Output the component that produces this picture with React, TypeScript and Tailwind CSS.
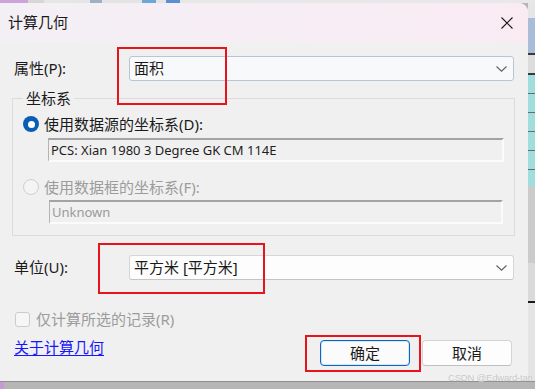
import React from "react";

const font = "font-['Noto_Sans','Noto_Sans_CJK_SC',sans-serif]";

function Chevron() {
  return (
    <svg width="11" height="6" viewBox="0 0 11 6" className="shrink-0">
      <path d="M0.5 0.5 L5.5 5.2 L10.5 0.5" fill="none" stroke="#606060" strokeWidth="1.1" />
    </svg>
  );
}

function Select({ value, focused }: { value: string; focused?: boolean }) {
  return (
    <div
      className={`w-[385px] h-[25px] flex items-center justify-between pl-[4px] pr-[6px] rounded-[3px] border ${
        focused ? "border-[#b7c6d6] bg-[#f7f9fb]" : "border-[#d6d6d6] border-b-[#c4c4c4] bg-[#fdfdfd]"
      }`}
    >
      <span className="text-[15px] leading-none text-[#1a1a1a]">{value}</span>
      <Chevron />
    </div>
  );
}

function Field({ value, disabled }: { value: string; disabled?: boolean }) {
  return (
    <div
      className={`h-[24px] flex items-center pl-[2px] bg-[#f0f0f0] border-t-2 border-l border-t-[#a3a3a3] border-l-[#b4b4b4] border-r-2 border-b-2 border-r-[#fbfbfb] border-b-[#fbfbfb] ${
        disabled ? "w-[454px] text-[#9a9a9a]" : "w-[456px] text-[#1e1e1e]"
      }`}
    >
      <span className="text-[13px] leading-none">{value}</span>
    </div>
  );
}

export default function App() {
  return (
    <div className={`w-[535px] h-[389px] bg-[#b6b6b6] flex flex-col overflow-hidden relative ${font}`}>
      {/* strip of the window behind */}
      <div className="h-[3px] flex shrink-0">
        <div className="w-[28px] bg-[#cda3dc]" />
        <div className="w-[16px] bg-[#d6d6d6]" />
        <div className="w-[46px] bg-[#e6e6e6]" />
        <div className="w-[12px] bg-[#9fb0c4]" />
        <div className="w-[40px] bg-[#e4e4e4]" />
        <div className="w-[14px] bg-[#6aa8d8]" />
        <div className="w-[10px] bg-[#e4e4e4]" />
        <div className="w-[14px] bg-[#5a8fd0]" />
        <div className="flex-1 bg-[#e8e8e8]" />
      </div>

      <div className="flex h-[378px] shrink-0">
        {/* dialog */}
        <div className="w-[528px] rounded-tr-[9px] bg-[#f0f0f0] flex flex-col overflow-hidden">
          <div className="h-[39px] shrink-0 flex items-center justify-between pl-[8px] pr-[15px] bg-gradient-to-r from-[#f3f0f5] to-[#faebf3]">
            <span className="text-[15px] text-[#1a1a1a]">计算几何</span>
            <svg width="12" height="12" viewBox="0 0 12 12">
              <path d="M0.5 0.5 L11.5 11.5 M11.5 0.5 L0.5 11.5" stroke="#1a1a1a" strokeWidth="1.1" />
            </svg>
          </div>

          <div className="flex flex-col text-[15px] text-[#1a1a1a]">
            <div className="flex items-center mt-[14px]">
              <span className="w-[129px] pl-[14px]">属性(P):</span>
              <Select value="面积" focused />
            </div>

            <fieldset className="ml-[12px] w-[503px] h-[148px] mt-[7px] border border-[#dcdcdc] flex flex-col">
              <legend className="ml-[10px] px-[3px] leading-[20px]">坐标系</legend>
              <div className="flex items-center gap-[5px] ml-[10px] mt-[6px]">
                <div className="w-[16px] h-[16px] rounded-full bg-[#0a5db4] flex items-center justify-center">
                  <div className="w-[7px] h-[7px] rounded-full bg-white" />
                </div>
                <span className="leading-[20px]">使用数据源的坐标系(D):</span>
              </div>
              <div className="ml-[35px] mt-[4px]">
                <Field value="PCS: Xian 1980 3 Degree GK CM 114E" />
              </div>
              <div className="flex items-center gap-[5px] ml-[10px] mt-[15px] text-[#9c9c9c]">
                <div className="w-[16px] h-[16px] rounded-full border border-[#cfcfcf] bg-[#f4f4f4]" />
                <span className="leading-[20px]">使用数据框的坐标系(F):</span>
              </div>
              <div className="ml-[36px] mt-[3px]">
                <Field value="Unknown" disabled />
              </div>
            </fieldset>

            <div className="flex items-center mt-[19px]">
              <span className="w-[129px] pl-[14px]">单位(U):</span>
              <Select value="平方米 [平方米]" />
            </div>

            <div className="flex items-center gap-[6px] ml-[15px] mt-[29px] text-[#9c9c9c]">
              <div className="w-[15px] h-[15px] rounded-[3px] border border-[#cccccc] bg-[#f6f6f6]" />
              <span className="leading-[20px]">仅计算所选的记录(R)</span>
            </div>

            <div className="flex items-start justify-between">
              <a className="ml-[14px] mt-[8px] text-[#1515ff] underline underline-offset-2 leading-[20px] cursor-pointer">
                关于计算几何
              </a>
              <div className="flex gap-[12px] mr-[16px] mt-[11px]">
                <button className="w-[90px] h-[26px] rounded-[4px] border border-[#0a66c2] bg-[#fbfbfb] text-[15px] leading-none shadow-[inset_0_0_0_1px_#d8e6f4]">
                  确定
                </button>
                <button className="w-[90px] h-[26px] rounded-[4px] border border-[#d4d4d4] border-b-[#c0c0c0] bg-[#fdfdfd] text-[15px] leading-none">
                  取消
                </button>
              </div>
            </div>
          </div>
        </div>

        {/* window behind, right edge */}
        <div className="flex-1 flex flex-col">
          <div className="h-[15px] bg-[#e6e6e6]" />
          <div className="h-[35px] bg-[#a9bdd8]" />
          <div className="h-[2px] bg-[#3a3a3a]" />
          <div className="h-[18px] bg-[#dcdcdc]" />
          <div className="h-[2px] bg-[#3a3a3a]" />
          <div className="h-[18px] bg-[#a0dedd]" />
          <div className="h-[1px] bg-[#6a6a6a]" />
          <div className="h-[18px] bg-[#a0dedd]" />
          <div className="h-[1px] bg-[#6a6a6a]" />
          <div className="h-[18px] bg-[#a0dedd]" />
          <div className="h-[1px] bg-[#6a6a6a]" />
          <div className="h-[18px] bg-[#a0dedd]" />
          <div className="h-[1px] bg-[#6a6a6a]" />
          <div className="h-[18px] bg-[#a0dedd]" />
          <div className="h-[1px] bg-[#6a6a6a]" />
          <div className="h-[16px] bg-[#a0dedd]" />
          <div className="h-[77px] bg-[#cbcbcb]" />
          <div className="h-[38px] bg-[#dadada]" />
          <div className="h-[2px] bg-[#1a1a1a]" />
          <div className="flex-1 bg-[#e4e4e4]" />
        </div>
      </div>

      <div className="flex-1 flex border-t border-[#8e8e8e]">
        <div className="w-[4px] bg-[#c59bd6]" />
        <div className="flex-1 bg-[#b6b6b6]" />
      </div>

      {/* red annotation boxes */}
      <div className="absolute left-[117px] top-[47px] w-[110px] h-[58px] border-2 border-[#e8141c]" />
      <div className="absolute left-[98px] top-[243px] w-[167px] h-[51px] border-2 border-[#e8141c]" />
      <div className="absolute left-[305px] top-[335px] w-[116px] h-[37px] border-2 border-[#e8141c]" />

      <span className="absolute left-[448px] top-[372px] whitespace-nowrap text-[9.5px] tracking-[-0.2px] leading-[11px] text-[#c6c6c6] [text-shadow:0_0_1px_#ffffff] font-['Liberation_Sans',sans-serif]">
        CSDN @Edward-tan
      </span>
    </div>
  );
}
